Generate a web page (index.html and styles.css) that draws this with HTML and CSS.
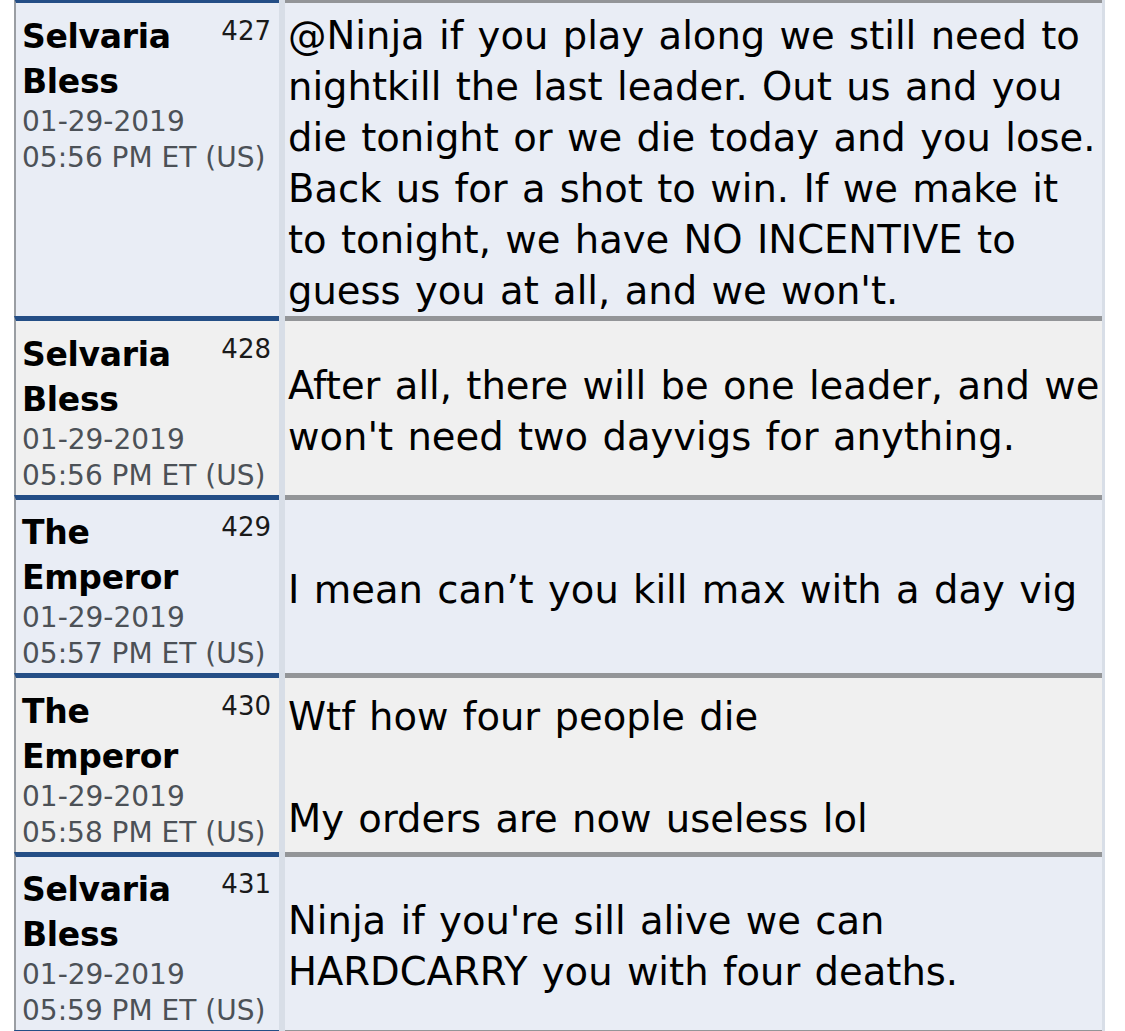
FILE: index.html
```html
<!DOCTYPE html>
<html lang="en">
<head>
<meta charset="utf-8">
<title>Thread</title>
<link rel="stylesheet" href="styles.css">
</head>
<body>
<div class="thread">
  <div class="post alt1">
    <div class="meta">
      <span class="num">427</span>
      <div class="name">Selvaria Bless</div>
      <div class="date">01-29-2019</div>
      <div class="date">05:56 PM ET (US)</div>
    </div>
    <div class="msg"><p>@Ninja if you play along we still need to<br>nightkill the last leader. Out us and you<br>die tonight or we die today and you lose.<br>Back us for a shot to win. If we make it<br>to tonight, we have NO INCENTIVE to<br>guess you at all, and we won't.</p></div>
  </div>
  <div class="post alt2">
    <div class="meta">
      <span class="num">428</span>
      <div class="name">Selvaria Bless</div>
      <div class="date">01-29-2019</div>
      <div class="date">05:56 PM ET (US)</div>
    </div>
    <div class="msg"><p>After all, there will be one leader, and we<br>won't need two dayvigs for anything.</p></div>
  </div>
  <div class="post alt1">
    <div class="meta">
      <span class="num">429</span>
      <div class="name">The Emperor</div>
      <div class="date">01-29-2019</div>
      <div class="date">05:57 PM ET (US)</div>
    </div>
    <div class="msg"><p>I mean can’t you kill max with a day vig</p></div>
  </div>
  <div class="post alt2">
    <div class="meta">
      <span class="num">430</span>
      <div class="name">The Emperor</div>
      <div class="date">01-29-2019</div>
      <div class="date">05:58 PM ET (US)</div>
    </div>
    <div class="msg"><p>Wtf how four people die<br><br>My orders are now useless lol</p></div>
  </div>
  <div class="post alt1">
    <div class="meta">
      <span class="num">431</span>
      <div class="name">Selvaria Bless</div>
      <div class="date">01-29-2019</div>
      <div class="date">05:59 PM ET (US)</div>
    </div>
    <div class="msg"><p>Ninja if you're sill alive we can<br>HARDCARRY you with four deaths.</p></div>
  </div>
  <div class="post alt2 tail">
    <div class="meta"></div>
    <div class="msg"></div>
  </div>
</div>
</body>
</html>
```

FILE: styles.css
```css
html, body {
  margin: 0;
  padding: 0;
  background: #ffffff;
}

body {
  padding-left: 14px;
  font-family: "DejaVu Sans", Verdana, sans-serif;
  color: #000;
}

.thread {
  width: 1091px;
  margin-top: -2px;
  background: #d8dee7;
  padding-right: 3px;
  box-sizing: border-box;
}

.post {
  display: grid;
  grid-template-columns: 265px 817px;
  column-gap: 6px;
}

.meta {
  border-top: 5px solid #244e86;
  border-left: 2px solid #9a9ea3;
  padding: 10.5px 8px 1px 6px;
}

.msg {
  border-top: 5px solid #939598;
  display: flex;
  align-items: center;
  padding: 6.5px 3px 0.5px 3px;
}

.alt1 .meta, .alt1 .msg { background: #e9edf5; }
.alt2 .meta, .alt2 .msg { background: #f0f0f0; }

.tail .meta, .tail .msg {
  height: 20px;
  padding: 0;
}

.num {
  float: right;
  font-size: 26px;
  line-height: 24px;
  margin-top: 5px;
  color: #1a1a1a;
}

.name {
  font-weight: bold;
  font-size: 33px;
  line-height: 45px;
  letter-spacing: -0.3px;
}

.date {
  font-size: 28px;
  line-height: 36px;
  color: #4c5157;
  white-space: nowrap;
}

.msg p {
  margin: 0;
  font-size: 38.5px;
  line-height: 51px;
  word-spacing: 2.1px;
  white-space: nowrap;
}
```
